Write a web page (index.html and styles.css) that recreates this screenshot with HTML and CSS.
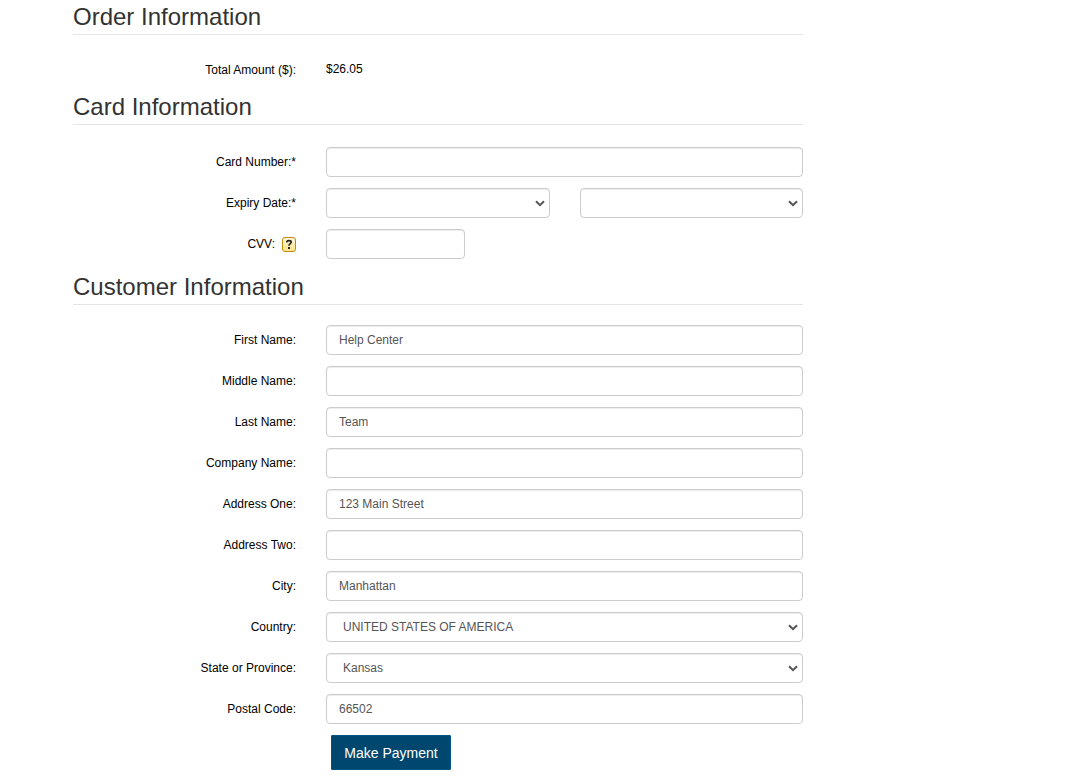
FILE: index.html
```html
<!DOCTYPE html>
<html lang="en">
<head>
<meta charset="utf-8">
<meta name="viewport" content="width=device-width, initial-scale=1">
<title>Make Payment</title>
<link rel="stylesheet" href="styles.css">
</head>
<body>
<form class="payment">
  <section class="section">
    <h2 class="section-title">Order Information</h2>
    <div class="row">
      <span class="label">Total Amount ($):</span>
      <span class="amount">$26.05</span>
    </div>
  </section>

  <section class="section section-card">
    <h2 class="section-title">Card Information</h2>
    <div class="row">
      <label class="label" for="card">Card Number:*</label>
      <input class="control" id="card" type="text">
    </div>
    <div class="row">
      <label class="label" for="month">Expiry Date:*</label>
      <div class="pair">
        <div class="select-wrap">
          <select class="control" id="month"><option></option></select>
          <svg class="chevron" viewBox="0 0 10 7"><path d="M1 1.2 5 5.2 9 1.2"/></svg>
        </div>
        <div class="select-wrap">
          <select class="control" id="year" aria-label="Expiry year"><option></option></select>
          <svg class="chevron" viewBox="0 0 10 7"><path d="M1 1.2 5 5.2 9 1.2"/></svg>
        </div>
      </div>
    </div>
    <div class="row">
      <div class="label label-help">
        <label for="cvv">CVV:</label>
        <button class="help" type="button" aria-label="About the CVV">
          <svg class="help-icon" viewBox="0 0 14 15">
            <defs><linearGradient id="glow" x2="0" y2="1"><stop offset="0" stop-color="#fff6d8"/><stop offset="1" stop-color="#ffe48a"/></linearGradient></defs>
            <rect x=".5" y=".5" width="13" height="14" rx="2.5" fill="url(#glow)" stroke="#c98a0c"/>
            <path d="M4.900 5.600V5c0-1 .7-1.400 2.100-1.400S9.200 4.200 9.200 5.200C9.200 6.700 7 6.700 7 8.700" fill="none" stroke="#222" stroke-width="1.600"/>
            <path d="M6 10h2v2H6z" fill="#222"/>
          </svg>
        </button>
      </div>
      <input class="control control-short" id="cvv" type="text">
    </div>
  </section>

  <section class="section">
    <h2 class="section-title">Customer Information</h2>
    <div class="row">
      <label class="label" for="first">First Name:</label>
      <input class="control" id="first" type="text" value="Help Center">
    </div>
    <div class="row">
      <label class="label" for="middle">Middle Name:</label>
      <input class="control" id="middle" type="text">
    </div>
    <div class="row">
      <label class="label" for="last">Last Name:</label>
      <input class="control" id="last" type="text" value="Team">
    </div>
    <div class="row">
      <label class="label" for="company">Company Name:</label>
      <input class="control" id="company" type="text">
    </div>
    <div class="row">
      <label class="label" for="address1">Address One:</label>
      <input class="control" id="address1" type="text" value="123 Main Street">
    </div>
    <div class="row">
      <label class="label" for="address2">Address Two:</label>
      <input class="control" id="address2" type="text">
    </div>
    <div class="row">
      <label class="label" for="city">City:</label>
      <input class="control" id="city" type="text" value="Manhattan">
    </div>
    <div class="row">
      <label class="label" for="country">Country:</label>
      <div class="select-wrap">
        <select class="control" id="country"><option>UNITED STATES OF AMERICA</option></select>
        <svg class="chevron" viewBox="0 0 10 7"><path d="M1 1.2 5 5.2 9 1.2"/></svg>
      </div>
    </div>
    <div class="row">
      <label class="label" for="state">State or Province:</label>
      <div class="select-wrap">
        <select class="control" id="state"><option>Kansas</option></select>
        <svg class="chevron" viewBox="0 0 10 7"><path d="M1 1.2 5 5.2 9 1.2"/></svg>
      </div>
    </div>
    <div class="row">
      <label class="label" for="postal">Postal Code:</label>
      <input class="control" id="postal" type="text" value="66502">
    </div>
    <div class="row">
      <button class="submit" type="submit">Make Payment</button>
    </div>
  </section>
</form>
</body>
</html>
```
FILE: styles.css
```css
* {
  box-sizing: border-box;
}

body {
  margin: 0;
  background: #fff;
  color: #000;
  font: 12px/18px "Liberation Sans", Arial, sans-serif;
}

.payment {
  max-width: 803px;
  padding: 4px 0 7px 73px;
}

.section {
  margin-bottom: 15px;
}

.section:last-child {
  margin-bottom: 0;
}

.section-title {
  margin: 0 0 20px;
  padding-bottom: 4px;
  border-bottom: 1px solid #e5e5e5;
  color: #333;
  font-size: 24px;
  font-weight: 400;
  line-height: 26px;
}

.section-card .section-title {
  margin-bottom: 22px;
}

.row {
  display: grid;
  grid-template-columns: minmax(0, 223fr) minmax(0, 477fr);
  column-gap: 30px;
  align-items: start;
}

.row + .row {
  margin-top: 11px;
}

.label {
  padding-top: 6px;
  text-align: right;
}

.amount {
  padding-top: 5px;
}

.label-help {
  display: flex;
  justify-content: flex-end;
  gap: 7px;
}

.help {
  display: flex;
  align-items: center;
  padding: 0;
  border: 0;
  background: none;
  cursor: pointer;
}

.help-icon {
  width: 14px;
  height: 15px;
}

.control {
  display: block;
  width: 100%;
  height: 30px;
  margin: 0;
  padding: 6px 12px;
  border: 1px solid #ccc;
  border-radius: 4px;
  background: #fff;
  box-shadow: inset 0 1px 1px rgba(0, 0, 0, 0.075);
  color: #555;
  font: inherit;
  line-height: 16px;
  appearance: none;
}

select.control {
  padding-left: 16px;
  padding-right: 24px;
}

.control-short {
  max-width: 139px;
}

.pair {
  display: grid;
  grid-template-columns: 1fr 1fr;
  gap: 30px;
}

.select-wrap {
  display: grid;
  align-items: center;
}

.select-wrap > * {
  grid-area: 1 / 1;
}

.chevron {
  justify-self: end;
  width: 10px;
  height: 7px;
  margin-right: 5px;
  fill: none;
  stroke: #555;
  stroke-width: 2;
  pointer-events: none;
}

.submit {
  grid-column: 2;
  justify-self: start;
  min-width: 120px;
  height: 35px;
  margin-left: 5px;
  padding: 0 12px;
  border: 1px solid #005580;
  border-radius: 1px;
  background: #00476f;
  color: #fff;
  font: 14px/20px "Liberation Sans", Arial, sans-serif;
  cursor: pointer;
}
```
